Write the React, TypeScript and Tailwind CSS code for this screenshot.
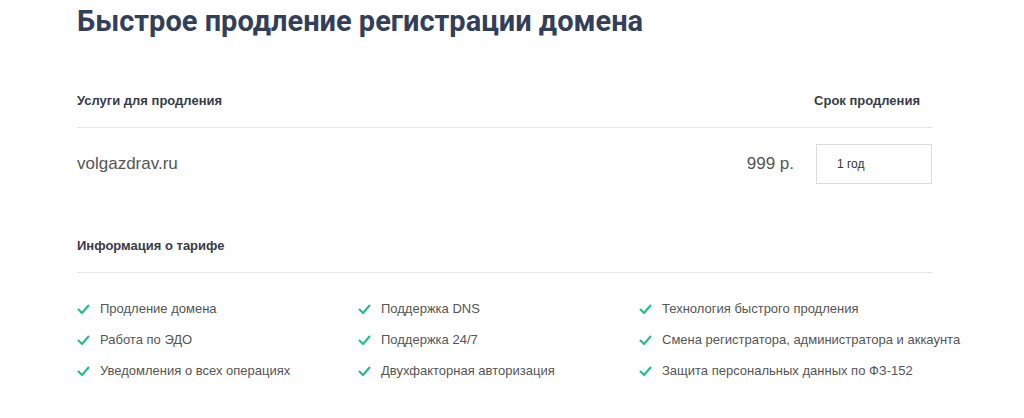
const features = [
  "Продление домена",
  "Поддержка DNS",
  "Технология быстрого продления",
  "Работа по ЭДО",
  "Поддержка 24/7",
  "Смена регистратора, администратора и аккаунта",
  "Уведомления о всех операциях",
  "Двухфакторная авторизация",
  "Защита персональных данных по ФЗ-152",
]

function Check() {
  return (
    <svg width="13" height="11" viewBox="0 0 13 11" fill="none" className="shrink-0">
      <path d="M1.5 5.5 L5 9 L11.5 1.5" stroke="#1fbd83" strokeWidth="2" strokeLinecap="round" strokeLinejoin="round" />
    </svg>
  )
}

export default function App() {
  return (
    <div className="w-[1024px] h-[418px] bg-white font-['Liberation_Sans',Arial,sans-serif] overflow-hidden">
      <div className="w-[855px] ml-[77px]">
        <h1 className="text-[29px] leading-[36px] font-bold text-[#333f5a] pt-[3px] font-['Roboto',Arial,sans-serif]">
          Быстрое продление регистрации домена
        </h1>

        <div className="mt-[54px] flex justify-between items-end pb-[18px] border-b border-[#e6e6e6]">
          <span className="text-[13px] leading-[16px] font-bold text-[#373c48]">Услуги для продления</span>
          <span className="text-[13px] leading-[16px] font-bold text-[#373c48] mr-[12px]">Срок продления</span>
        </div>

        <div className="flex items-center mt-[16px]">
          <span className="flex-1 text-[17px] text-[#555]">volgazdrav.ru</span>
          <span className="text-[17px] text-[#555] mr-[22px]">999 р.</span>
          <div className="w-[116px] h-[40px] border border-[#dcdcdc] flex items-center pl-[20px] text-[12px] text-[#333]">
            1 год
          </div>
        </div>

        <div className="mt-[54px] pb-[18px] border-b border-[#e6e6e6]">
          <span className="block text-[13px] leading-[16px] font-bold text-[#373c48]">Информация о тарифе</span>
        </div>

        <div className="grid grid-cols-[281px_281px_1fr] gap-y-[15px] mt-[28px]">
          {features.map((f) => (
            <div key={f} className="flex items-center gap-[10px] h-[16px]">
              <Check />
              <span className="text-[13px] leading-[16px] text-[#555] whitespace-nowrap">{f}</span>
            </div>
          ))}
        </div>
      </div>
    </div>
  )
}
